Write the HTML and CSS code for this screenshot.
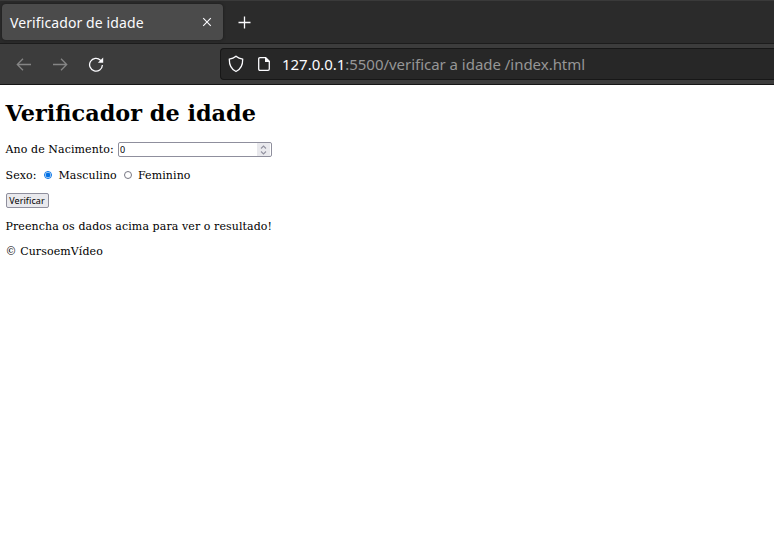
FILE: index.html
```html
<!DOCTYPE html>
<html lang="pt-br">
<head>
<meta charset="utf-8">
<title>Verificador de idade</title>
<link rel="stylesheet" href="styles.css">
</head>
<body>
<header class="browser">
  <div class="tabs">
    <div class="tab"><span class="tab-title">Verificador de idade</span>
      <svg class="close" width="10" height="10" viewBox="0 0 10 10"><path d="M1.2 1.2l7.6 7.6M8.8 1.2L1.2 8.8"/></svg>
    </div>
    <svg class="plus" width="14" height="14" viewBox="0 0 14 14"><path d="M7.500 1.500v12M1.500 7.500h12"/></svg>
  </div>
  <div class="toolbar">
    <svg class="nav dim" width="16" height="16" viewBox="0 0 16 16"><path d="M15 8.500H1.500M7 2.800L1.300 8.500 7 14.200"/></svg>
    <svg class="nav dim" width="16" height="16" viewBox="0 0 16 16"><path d="M1 8.500h13.500M9 2.800L14.700 8.500 9 14.200"/></svg>
    <svg class="nav" width="16" height="16" viewBox="0 0 16 16"><path d="M14.400 9A6.400 6.400 0 1 1 12.500 4.200l1 1"/><path class="solid" d="M15.200 1.500v5.300H9.900z"/></svg>
    <div class="address">
      <svg class="shield" width="16" height="18" viewBox="0 0 16 18"><path d="M8 1.200C6 2.800 3.800 3.700 1.300 4.200 1.200 9.800 3.200 14.200 8 16.500 12.800 14.200 14.800 9.800 14.700 4.200 12.200 3.700 10 2.800 8 1.200z"/></svg>
      <svg class="page-icon" width="12" height="14" viewBox="0 0 12 14"><path d="M2 .7h5.700l3.600 3.600V12q0 1.300-1.300 1.300H2Q.7 13.300.7 12V2Q.7.7 2 .7z"/><path class="solid" d="M7 0v5h5z"/></svg>
      <span class="url"><b>127.0.0.1</b>:5500/verificar a idade /index.html</span>
    </div>
  </div>
</header>
<main>
  <h1>Verificador de idade</h1>
  <p class="row year"><label>Ano de Nacimento:</label>
    <span class="field"><span class="value">0</span><span class="spin"><svg width="7" height="10" viewBox="0 0 7 10"><path d="M1 3.500L3.500 1 6 3.500M1 6.500L3.500 9 6 6.500"/></svg></span></span>
  </p>
  <p class="row sex"><span class="sex-label">Sexo:</span><i class="radio on"></i><span class="male">Masculino</span><i class="radio"></i><span class="female">Feminino</span></p>
  <p class="row action"><button type="button">Verificar</button></p>
  <p class="row result">Preencha os dados acima para ver o resultado!</p>
  <p class="row credit">© CursoemVídeo</p>
</main>
</body>
</html>
```
FILE: styles.css
```css
* { box-sizing: border-box; }
body { margin: 0; background: #fff; color: #000; font-family: "DejaVu Serif", serif; font-size: 11px; overflow: hidden; }
svg { display: block; flex: none; fill: none; stroke: #fbfbfe; stroke-width: 1.3; }
.solid { fill: #fbfbfe; stroke: none; }
.browser { height: 85px; font-family: "Noto Sans", sans-serif; color: #fbfbfe; }
.tabs { height: 43px; display: flex; align-items: center; background: #2b2b2b; border-top: 1px solid #3a3a3a; padding-left: 2px; }
.tab { width: 221px; height: 36px; border-radius: 4px; background: #4b4b4b; box-shadow: 0 0 3px #1a1a1a; display: flex; align-items: center; justify-content: space-between; padding: 0 11px 0 8px; }
.tab-title { font-size: 14px; letter-spacing: .1px; white-space: nowrap; }
.close { stroke-width: 1.1; }
.plus { margin-left: 14px; }
.toolbar { height: 42px; display: flex; align-items: center; gap: 20px; padding-left: 16px; background: #3c3c3c; border-top: 1px solid #1c1c1c; border-bottom: 1px solid #151515; }
.dim { stroke: #858585; }
.address { flex: 1; height: 32px; margin-left: 96px; display: flex; align-items: center; background: #272727; border: 1px solid #171717; border-right: 0; border-radius: 4px 0 0 4px; padding-left: 7px; }
.page-icon { margin-left: 14px; }
.url { margin-left: 12px; color: #969696; font-size: 15px; letter-spacing: -.03px; white-space: nowrap; }
.url b { font-weight: 400; color: #fbfbfe; }
main { padding: 14px 5.500px 0; }
h1 { margin: 0; height: 29px; line-height: 29px; font-size: 22.370px; }
.row { margin: 0; height: 15px; line-height: 15px; display: flex; align-items: center; white-space: nowrap; letter-spacing: .09px; }
.year { margin-top: 14px; }
.year label { width: 109.500px; }
.field { width: 154px; height: 15px; margin-left: 3px; border: 1px solid #8f8f9d; border-radius: 2px; display: flex; justify-content: space-between; font: 9px/13px "Noto Sans", sans-serif; padding: 0 1px; }
.spin { width: 13px; background: #e9e9ed; display: flex; align-items: center; justify-content: center; }
.spin svg { stroke: #9292a0; stroke-width: 1.1; }
.sex { margin-top: 11px; }
.sex-label { width: 38px; }
.radio { width: 8px; height: 8px; margin-bottom: 1px; border: 1px solid #777783; border-radius: 50%; }
.on { border-color: #0070e5; background: radial-gradient(circle, #0070e5 0 2px, #fff 2.800px); }
.male { margin-left: 7px; width: 65px; }
.female { margin-left: 6.500px; }
.action { margin-top: 10px; }
button { width: 43px; height: 15px; padding: 0; border: 1px solid #8f8f9d; border-radius: 2px; background: #e9e9ed; color: #000; font: 9px/12px "Noto Sans", sans-serif; letter-spacing: .08px; }
.result { margin-top: 11px; }
.credit { margin-top: 10px; }
```
